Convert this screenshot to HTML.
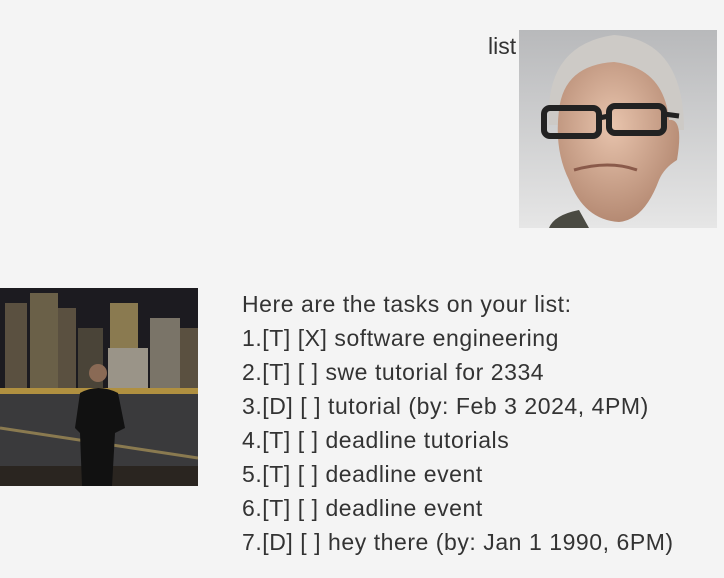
<!DOCTYPE html>
<html><head><meta charset="utf-8"><style>
html,body{margin:0;padding:0;width:724px;height:578px;background:#f4f4f4;overflow:hidden;font-family:"Liberation Sans",sans-serif;color:#333}
.t{position:absolute;font-size:23px;white-space:nowrap;letter-spacing:0.55px}
</style></head><body>
<div class="t" style="left:488px;top:33px;letter-spacing:0">list</div>
<svg style="position:absolute;left:519px;top:30px" width="198" height="198" viewBox="0 0 198 198">
<defs><linearGradient id="bg" x1="0" y1="0" x2="0" y2="1"><stop offset="0" stop-color="#b8b9bb"/><stop offset="1" stop-color="#e6e6e6"/></linearGradient>
<radialGradient id="sk" cx="0.45" cy="0.4" r="0.6"><stop offset="0" stop-color="#e8c4ad"/><stop offset="1" stop-color="#b58a73"/></radialGradient></defs>
<rect width="198" height="198" fill="url(#bg)"/>
<path d="M30 95 Q25 15 95 5 Q165 10 165 100 L152 100 Q140 45 95 40 Q55 45 45 95Z" fill="#cdcac6"/>
<path d="M40 80 Q45 35 95 32 Q145 38 150 90 Q165 88 158 130 Q145 138 140 150 Q125 190 100 192 Q65 190 50 150 Q35 120 40 80Z" fill="url(#sk)"/>
<rect x="25" y="78" width="55" height="28" rx="6" fill="none" stroke="#222" stroke-width="6"/>
<rect x="90" y="76" width="55" height="27" rx="6" fill="none" stroke="#222" stroke-width="6"/>
<path d="M80 88 L90 86 M145 84 L160 86" stroke="#222" stroke-width="5"/>
<path d="M55 140 Q90 130 118 140" stroke="#8a5a4a" stroke-width="3" fill="none"/>
<path d="M30 198 Q35 185 60 180 L70 198Z" fill="#4a4a42"/>
</svg>
<svg style="position:absolute;left:0;top:288px" width="198" height="198" viewBox="0 0 198 198">
<rect width="198" height="198" fill="#1c1b20"/>
<g fill="#5a5040">
<rect x="5" y="15" width="22" height="90"/><rect x="30" y="5" width="28" height="100" fill="#6a6048"/>
<rect x="58" y="20" width="18" height="85"/><rect x="78" y="40" width="25" height="65" fill="#4a4438"/>
<rect x="110" y="15" width="28" height="50" fill="#8a7a50"/><rect x="108" y="60" width="40" height="45" fill="#9a9488"/>
<rect x="150" y="30" width="30" height="75" fill="#7a7468"/><rect x="180" y="40" width="18" height="65"/>
</g>
<rect x="0" y="100" width="198" height="98" fill="#3a3a3c"/>
<rect x="0" y="100" width="198" height="6" fill="#b09040"/>
<path d="M0 140 L198 170" stroke="#8a7a50" stroke-width="3"/>
<rect x="0" y="178" width="198" height="20" fill="#2a2520"/>
<circle cx="98" cy="85" r="9" fill="#8a6a55"/>
<path d="M80 105 Q98 95 118 105 L125 140 L115 145 L112 198 L82 198 L80 145 L75 140Z" fill="#111"/>
</svg>
<div class="t" style="left:242px;top:291px">Here are the tasks on your list:</div>
<div class="t" style="left:242px;top:325px">1.[T] [X] software engineering</div>
<div class="t" style="left:242px;top:359px">2.[T] [ ] swe tutorial for 2334</div>
<div class="t" style="left:242px;top:393px">3.[D] [ ] tutorial (by: Feb 3 2024, 4PM)</div>
<div class="t" style="left:242px;top:427px">4.[T] [ ] deadline tutorials</div>
<div class="t" style="left:242px;top:461px">5.[T] [ ] deadline event</div>
<div class="t" style="left:242px;top:495px">6.[T] [ ] deadline event</div>
<div class="t" style="left:242px;top:529px">7.[D] [ ] hey there (by: Jan 1 1990, 6PM)</div>
</body></html>
